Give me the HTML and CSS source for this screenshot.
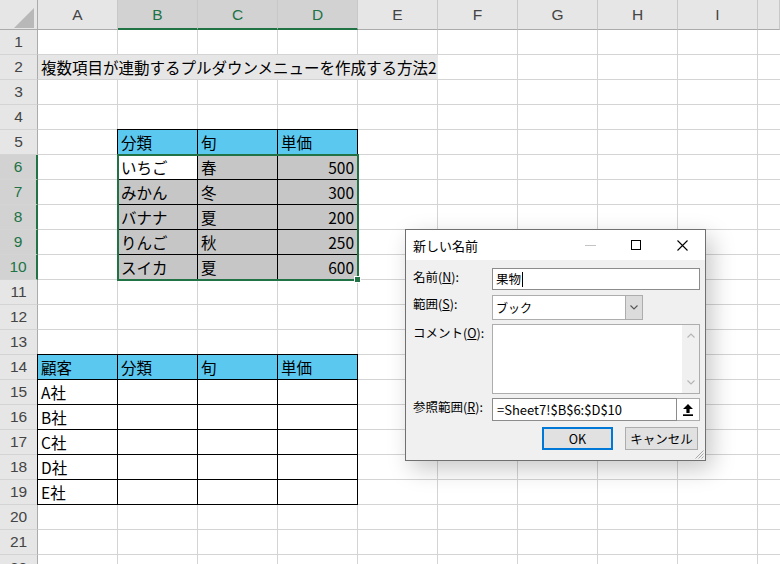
FILE: index.html
```html
<!DOCTYPE html>
<html lang="ja">
<head>
<meta charset="utf-8">
<title>名前の定義</title>
<link rel="stylesheet" href="styles.css">
</head>
<body>
<div class="sheet">
  <div class="corner"><span class="tri"></span></div>
  <div class="ch">A</div>
  <div class="ch sel">B</div>
  <div class="ch sel">C</div>
  <div class="ch sel">D</div>
  <div class="ch">E</div>
  <div class="ch">F</div>
  <div class="ch">G</div>
  <div class="ch">H</div>
  <div class="ch">I</div>
  <div class="ch"></div>

  <div class="rh">1</div>
  <div class="rh">2</div>
  <div class="rh">3</div>
  <div class="rh">4</div>
  <div class="rh">5</div>
  <div class="rh sel">6</div>
  <div class="rh sel">7</div>
  <div class="rh sel">8</div>
  <div class="rh sel">9</div>
  <div class="rh sel">10</div>
  <div class="rh">11</div>
  <div class="rh">12</div>
  <div class="rh">13</div>
  <div class="rh">14</div>
  <div class="rh">15</div>
  <div class="rh">16</div>
  <div class="rh">17</div>
  <div class="rh">18</div>
  <div class="rh">19</div>
  <div class="rh">20</div>
  <div class="rh">21</div>
  <div class="rh last"><span>22</span></div>

  <div class="band">複数項目が連動するプルダウンメニューを作成する方法2</div>

  <div class="tbl tbl-fruit">
    <div class="c h">分類</div><div class="c h">旬</div><div class="c h">単価</div>
    <div class="c">いちご</div><div class="c g">春</div><div class="c g n">500</div>
    <div class="c g">みかん</div><div class="c g">冬</div><div class="c g n">300</div>
    <div class="c g">バナナ</div><div class="c g">夏</div><div class="c g n">200</div>
    <div class="c g">りんご</div><div class="c g">秋</div><div class="c g n">250</div>
    <div class="c g">スイカ</div><div class="c g">夏</div><div class="c g n">600</div>
  </div>

  <div class="selection"><span class="handle"></span></div>

  <div class="tbl tbl-cust">
    <div class="c h">顧客</div><div class="c h">分類</div><div class="c h">旬</div><div class="c h">単価</div>
    <div class="c">A社</div><div class="c"></div><div class="c"></div><div class="c"></div>
    <div class="c">B社</div><div class="c"></div><div class="c"></div><div class="c"></div>
    <div class="c">C社</div><div class="c"></div><div class="c"></div><div class="c"></div>
    <div class="c">D社</div><div class="c"></div><div class="c"></div><div class="c"></div>
    <div class="c">E社</div><div class="c"></div><div class="c"></div><div class="c"></div>
  </div>
</div>

<div class="dialog">
  <div class="titlebar">
    <span class="title">新しい名前</span>
    <span class="tbtn"><svg width="11" height="10" viewBox="0 0 11 10"><line x1="0" y1="5.5" x2="11" y2="5.5" stroke="#c4c4c4" stroke-width="1"/></svg></span>
    <span class="tbtn"><svg width="10" height="10" viewBox="0 0 10 10"><rect x="0.5" y="0.5" width="9" height="9" fill="none" stroke="#000" stroke-width="1"/></svg></span>
    <span class="tbtn"><svg width="11" height="11" viewBox="0 0 11 11"><path d="M0.5 0.5 L10.5 10.5 M10.5 0.5 L0.5 10.5" stroke="#000" stroke-width="1.1" fill="none"/></svg></span>
  </div>
  <div class="dbody">
    <div class="frow">
      <span class="lbl">名前(<u>N</u>):</span>
      <div class="field input">果物<span class="caret"></span></div>
    </div>
    <div class="frow r-scope">
      <span class="lbl">範囲(<u>S</u>):</span>
      <div class="field select">
        <span class="seltext">ブック</span>
        <span class="dd"><svg width="8" height="5" viewBox="0 0 8 5"><path d="M0.5 0.5 L4 4 L7.5 0.5" fill="none" stroke="#555" stroke-width="1.1"/></svg></span>
      </div>
    </div>
    <div class="frow r-comment">
      <span class="lbl">コメント(<u>O</u>):</span>
      <div class="field textarea">
        <div class="vscroll">
          <svg width="8" height="5" viewBox="0 0 8 5"><path d="M0.5 4.5 L4 1 L7.5 4.5" fill="none" stroke="#b4b4b4" stroke-width="1.1"/></svg>
          <svg width="8" height="5" viewBox="0 0 8 5"><path d="M0.5 0.5 L4 4 L7.5 0.5" fill="none" stroke="#b4b4b4" stroke-width="1.1"/></svg>
        </div>
      </div>
    </div>
    <div class="frow r-ref">
      <span class="lbl">参照範囲(<u>R</u>):</span>
      <div class="field ref">
        <span class="reftext">=Sheet7!$B$6:$D$10</span>
        <span class="refbtn"><svg width="10" height="12" viewBox="0 0 10 12"><path d="M5 0 L10 5 H6.6 V9 H3.4 V5 H0 Z" fill="#000"/><rect x="0" y="10.3" width="10" height="1.7" fill="#000"/></svg></span>
      </div>
    </div>
    <div class="buttons">
      <button class="btn ok">OK</button>
      <button class="btn">キャンセル</button>
    </div>
  </div>
  <span class="grip"><svg width="10" height="10" viewBox="0 0 10 10"><path d="M9.5 1.5 L1.5 9.5 M9.5 4.5 L4.5 9.5 M9.5 7.5 L7.5 9.5" stroke="#a8a8a8" stroke-width="1" fill="none"/></svg></span>
</div>
</body>
</html>
```

FILE: styles.css
```css
* { box-sizing: border-box; }

html, body {
  margin: 0;
  padding: 0;
}

body {
  width: 780px;
  height: 564px;
  overflow: hidden;
  position: relative;
  background: #fff;
  font-family: "Noto Sans CJK JP", "Noto Sans", sans-serif;
  color: #000;
}

/* ---------- worksheet ---------- */
.sheet {
  display: grid;
  grid-template-columns: 38px repeat(9, 80px) 22px;
  grid-template-rows: 30px repeat(21, 25px) 9px;
  width: 780px;
  height: 564px;
  overflow: hidden;
  background-color: #fff;
  background-image:
    linear-gradient(to right, #d4d4d4 1px, transparent 1px),
    linear-gradient(to bottom, #d4d4d4 1px, transparent 1px);
  background-size: 80px 25px;
  background-position: 117px 29px;
  font-size: 15.5px;
}

.corner {
  background: #e6e6e6;
  border-right: 1px solid #ababab;
  border-bottom: 1px solid #ababab;
  display: flex;
  justify-content: flex-end;
  align-items: flex-end;
  padding: 0 3px 1px 0;
}

.tri {
  width: 20px;
  height: 20px;
  background: #b8b8b8;
  clip-path: polygon(100% 0, 100% 100%, 0 100%);
}

.ch {
  background: #e6e6e6;
  border-right: 1px solid #c8c8c8;
  border-bottom: 1px solid #ababab;
  display: flex;
  align-items: center;
  justify-content: center;
  color: #444;
  font-family: "Liberation Sans", "Noto Sans", sans-serif;
  font-size: 15.5px;
  padding-top: 1px;
}

.ch.sel {
  background: #d2d2d2;
  color: #217346;
  border-bottom: 2px solid #217346;
}

.rh {
  grid-column: 1;
  background: #e6e6e6;
  border-right: 1px solid #ababab;
  border-bottom: 1px solid #d4d4d4;
  display: flex;
  align-items: center;
  justify-content: center;
  color: #444;
  font-family: "Liberation Sans", "Noto Sans", sans-serif;
  font-size: 15.5px;
}

.rh.sel {
  background: #d2d2d2;
  color: #217346;
  border-right: 2px solid #217346;
}

.rh.last {
  align-items: flex-start;
  overflow: hidden;
  border-bottom: none;
}

.rh.last span {
  line-height: 25px;
}

.band {
  grid-column: 2 / 7;
  grid-row: 3;
  background: #e7e6e6;
  margin-bottom: 1px;
  padding-left: 3px;
  line-height: 24px;
  white-space: nowrap;
}

.tbl {
  display: grid;
  grid-auto-rows: 25px;
  margin: -1px 0 0 -1px;
  border-top: 1px solid #000;
  border-left: 1px solid #000;
}

.tbl-fruit {
  grid-column: 3 / 6;
  grid-row: 6 / 12;
  grid-template-columns: repeat(3, 80px);
}

.tbl-cust {
  grid-column: 2 / 6;
  grid-row: 15 / 21;
  grid-template-columns: repeat(4, 80px);
}

.c {
  border-right: 1px solid #000;
  border-bottom: 1px solid #000;
  padding: 0 3px;
  line-height: 24px;
  white-space: nowrap;
  background: #fff;
}

.c.h { background: #5bc8f0; }
.c.g { background: #c6c6c6; }
.c.n { text-align: right; }

.selection {
  grid-column: 3 / 6;
  grid-row: 7 / 12;
  margin: -1px;
  border: 2px solid #217346;
  position: relative;
  z-index: 1;
}

.handle {
  position: absolute;
  right: -4px;
  bottom: -4px;
  width: 7px;
  height: 7px;
  background: #217346;
  border: 1px solid #fff;
}

/* ---------- dialog ---------- */
.dialog {
  position: absolute;
  left: 405px;
  top: 229px;
  width: 301px;
  height: 232px;
  background: #f0f0f0;
  border: 1px solid #707070;
  box-shadow: 6px 8px 22px rgba(0, 0, 0, 0.22);
  font-size: 12.5px;
  z-index: 5;
}

.titlebar {
  height: 30px;
  background: #fff;
  display: flex;
  align-items: center;
}

.title {
  flex: 1;
  padding-left: 7px;
  font-size: 13px;
}

.tbtn {
  width: 46px;
  height: 30px;
  display: flex;
  align-items: center;
  justify-content: center;
}

.dbody {
  padding: 8px 5px 0 7px;
}

.frow {
  display: flex;
}

.lbl {
  width: 79px;
  flex: none;
  line-height: 18px;
  white-space: nowrap;
}

.r-scope { margin-top: 5px; }
.r-comment { margin-top: 4px; }
.r-ref { margin-top: 4px; }

.field {
  background: #fff;
  border: 1px solid #8c8c8c;
}

.input {
  width: 208px;
  height: 22px;
  line-height: 20px;
  padding-left: 3px;
  display: flex;
  align-items: center;
}

.caret {
  width: 1px;
  height: 15px;
  background: #000;
  margin-left: 1px;
}

.select {
  width: 151px;
  height: 25px;
  display: flex;
  border-color: #adadad;
}

.seltext {
  flex: 1;
  padding-left: 3px;
  line-height: 23px;
  font-size: 12px;
}

.dd {
  width: 17px;
  background: #dcdcdc;
  border-left: 1px solid #adadad;
  display: flex;
  align-items: center;
  justify-content: center;
}

.textarea {
  width: 208px;
  height: 70px;
  display: flex;
  justify-content: flex-end;
  border-color: #adadad;
}

.vscroll {
  width: 17px;
  background: #f0f0f0;
  display: flex;
  flex-direction: column;
  align-items: center;
  justify-content: space-between;
  padding: 8px 0 8px;
}

.ref {
  width: 208px;
  height: 23px;
  display: flex;
  border: none;
  background: none;
}

.reftext {
  flex: 1;
  border: 1px solid #8c8c8c;
  background: #fff;
  padding-left: 4px;
  line-height: 21px;
  font-size: 13px;
  white-space: nowrap;
}

.refbtn {
  width: 23px;
  border: 1px solid #adadad;
  border-left: none;
  background: #fff;
  display: flex;
  align-items: center;
  justify-content: center;
}

.buttons {
  margin-top: 6px;
  display: flex;
  justify-content: flex-end;
  gap: 12px;
  padding-right: 2px;
}

.btn {
  height: 23px;
  padding: 0;
  margin: 0;
  font-family: inherit;
  font-size: 12.5px;
  color: #000;
  background: #e1e1e1;
  border: 1px solid #adadad;
  width: 73px;
}

.btn.ok {
  width: 71px;
  border: 2px solid #0078d7;
}

.grip {
  position: absolute;
  right: 1px;
  bottom: 1px;
  width: 10px;
  height: 10px;
  display: flex;
}
```
